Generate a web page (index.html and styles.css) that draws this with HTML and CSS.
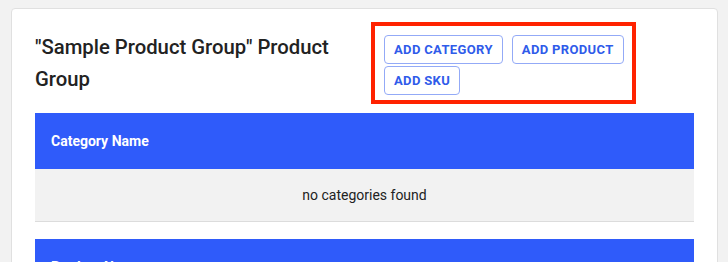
FILE: index.html
```html
<!DOCTYPE html>
<html>
<head>
<meta charset="utf-8">
<link rel="stylesheet" href="styles.css">
</head>
<body>
<div class="card">
  <div class="head">
    <h1 class="title">"Sample Product Group" Product Group</h1>
    <div class="actions">
      <button class="btn">ADD CATEGORY</button>
      <button class="btn">ADD PRODUCT</button>
      <button class="btn">ADD SKU</button>
    </div>
  </div>
  <div class="table">
    <div class="thead">Category Name</div>
    <div class="empty">no categories found</div>
  </div>
  <div class="table">
    <div class="thead">Product Name</div>
    <div class="empty">no products found</div>
  </div>
</div>
</body>
</html>
```
FILE: styles.css
```css
html, body {
  margin: 0;
  padding: 0;
  background: #f2f2f2;
  font-family: Roboto, "Liberation Sans", sans-serif;
  color: #222;
}
body {
  padding: 8px 10px 0 11px;
}
.card {
  background: #fff;
  border: 1px solid #e0e0e0;
  border-radius: 4px;
  padding: 13px 23px 20px 23px;
  box-sizing: content-box;
  width: 659px;
}
.head {
  display: flex;
  align-items: center;
  margin-bottom: 9px;
}
.title {
  flex: 0 0 336px;
  margin: 0;
  font-size: 20.3px;
  font-weight: 500;
  line-height: 32px;
  color: #222;
}
.actions {
  width: 265px;
  box-sizing: border-box;
  border: 4px solid #ff2200;
  padding: 9px 4px 5px 9px;
  display: flex;
  flex-wrap: wrap;
  gap: 2px 9px;
}
.btn {
  height: 29px;
  padding: 0 9px;
  border: 1px solid #93aaf7;
  border-radius: 4px;
  background: #fff;
  color: #2f5bea;
  font-family: Roboto, "Liberation Sans", sans-serif;
  font-size: 13px;
  font-weight: 700;
  letter-spacing: 0.35px;
}
.table {
  margin-bottom: 17px;
}
.thead {
  height: 56px;
  background: #2f5bfa;
  color: #fff;
  font-size: 14px;
  font-weight: 700;
  padding-left: 16px;
  display: flex;
  align-items: center;
}
.empty {
  height: 52px;
  background: #f2f2f2;
  border-bottom: 1px solid #dcdcdc;
  font-size: 14px;
  display: flex;
  align-items: center;
  justify-content: center;
  color: #222;
}
```
